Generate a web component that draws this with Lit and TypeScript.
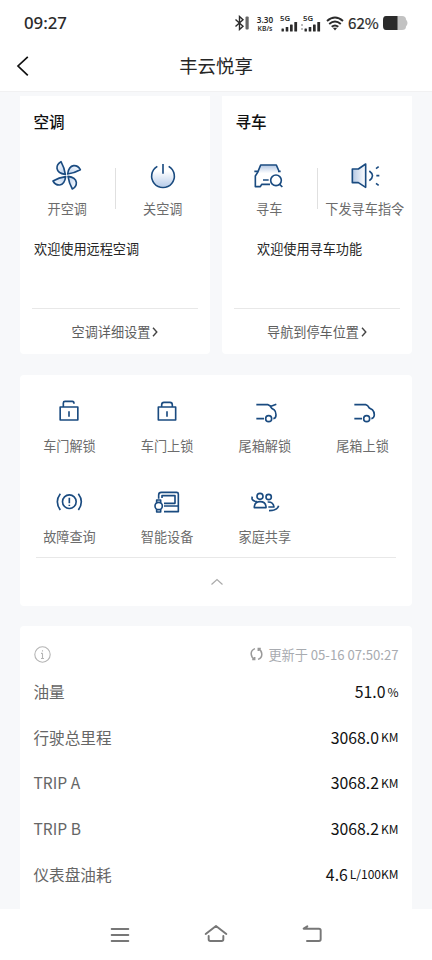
import { LitElement, html, css, svg, TemplateResult } from "lit";
import { customElement, property } from "lit/decorators.js";

type Glyph = { box: string; art: TemplateResult };

const GLYPHS: Record<string, Glyph> = {
  fan: {
    box: "125 210 96 96",
    art: svg`${[0, 90, 180, 270].map(
      (a) => svg`<path transform="rotate(${a} 172 256)" fill="url(#tint)" d="M155 215 Q142 222 143 235 Q145 250 168 253 Q165 233 155 215Z"/>`
    )}`,
  },
  power: {
    box: "411 209 96 96",
    art: svg`<circle cx="459" cy="258" r="31" fill="url(#rise)" stroke="none"/><path d="M442 228 A34 34 0 1 0 476 228 M459 221 V250"/>`,
  },
  findCar: {
    box: "112 210 96 96",
    art: svg`<path fill="url(#fall)" stroke="none" d="M135 226 H182 L191 250 H126Z"/><path d="M116 244 H126 M126 247 L135 225 H182 L191 246 M187 244 H195 M126 247 L119 258 V290 H134 L138 283 H163 M142 270 H159"/><circle cx="181" cy="271" r="16" fill="#fff"/><path d="M192 283 L200 291"/>`,
  },
  horn: {
    box: "397 209 96 96",
    art: svg`<path fill="url(#side)" d="M407 236 H425 L447 221 V291 L425 277 H407Z"/><path d="M458 242 Q477 256 458 271 M478 235 L486 229 M479 256 H488 M478 279 L486 285"/>`,
  },
  unlock: {
    box: "100 32 96 96",
    art: svg`<path d="M121.5 65 H174.5 V104 H121.5Z M131 65 V53 Q131 48 136 48 H158 Q163 48 163 55 M148 78 V94"/>`,
  },
  lock: {
    box: "393 32 96 96",
    art: svg`<path d="M415 65 H467 V104 H415Z M425 65 V59 Q425 51 432 51 H450 Q457 51 457 59 V65 M441 78 V94"/>`,
  },
  trunkOpen: {
    box: "86 32 96 96",
    art: svg`<path d="M108 58 H143 L152 63 L168 57 M149 62 Q152 69 161 73 Q167 78 167 88 Q167 99 159 100 M108 100 H131"/><circle cx="145" cy="100" r="9"/>`,
  },
  trunkShut: {
    box: "379 32 96 96",
    art: svg`<path d="M401 58 H435 Q441 59 446 68 L455 73 Q461 79 461 89 Q460 99 452 100 M401 100 H424"/><circle cx="438" cy="100" r="9"/>`,
  },
  fault: {
    box: "100 35 96 96",
    art: svg`<circle cx="149" cy="79" r="20.5"/><path d="M149 67 V84 M149 88 V92 M122 55 Q104 79 122 104 M176 55 Q194 79 176 104"/>`,
  },
  devices: {
    box: "393 35 96 96",
    art: svg`<path d="M416 70 V59 Q416 51 424 51 H470 Q475 51 475 56 V109 H432 M426 68 V61 H465 V84 H432 M432 92 H475"/><circle cx="416" cy="92" r="11"/><path d="M410 82 V74 H422 V82 M410 102 V110 H422 V102"/>`,
  },
  family: {
    box: "88 35 96 96",
    art: svg`<circle cx="121" cy="63" r="9"/><path d="M104 97 V93 Q106 79 121 79 Q137 79 139 93 V97Z"/><circle cx="147" cy="65" r="8"/><path d="M144 80 Q161 79 163 95 H146 M98 64 Q94 74 106 78 L112 79 M177 91 Q173 106 148 106"/>`,
  },
};

@customElement("line-icon")
class LineIcon extends LitElement {
  @property() name = "";
  static styles = css`
    :host { display: block; width: 32px; height: 32px; }
    svg { display: block; width: 32px; height: 32px; fill: none; stroke: #1a4b80; stroke-width: 4.9; stroke-linejoin: round; }
  `;
  render() {
    const g = GLYPHS[this.name];
    return html`<svg viewBox=${g.box}>
      <defs>
        <linearGradient id="tint" x1="0" y1="0" x2="1" y2="1"><stop offset="0" stop-color="#fff"/><stop offset="1" stop-color="#b9d0ee"/></linearGradient>
        <linearGradient id="rise" x1="0" y1="0" x2="0" y2="1"><stop offset=".25" stop-color="#fff"/><stop offset="1" stop-color="#b9cdea"/></linearGradient>
        <linearGradient id="fall" x1="0" y1="0" x2="0" y2="1"><stop offset="0" stop-color="#b4c8e4"/><stop offset="1" stop-color="#fff"/></linearGradient>
        <linearGradient id="side" x1="0" y1="0" x2="1" y2="0"><stop offset="0" stop-color="#b4c8e4"/><stop offset="1" stop-color="#fff"/></linearGradient>
      </defs>
      ${g.art}
    </svg>`;
  }
}

@customElement("status-bar")
class StatusBar extends LitElement {
  static styles = css`
    :host { display: flex; height: 46px; padding: 0 23px 0 24px; align-items: center; justify-content: space-between; color: #2b2b2b; font-family: "Noto Sans", "Noto Sans CJK SC", sans-serif; }
    .time { font-size: 16.8px; font-weight: 500; line-height: 46px; }
    .right { display: flex; align-items: center; }
    svg { display: block; }
    .speed { display: flex; flex-direction: column; align-items: center; gap: 1px; width: 20px; margin: 0 5px 0 5px; font-weight: 600; white-space: nowrap; }
    .rate { font-size: 8.2px; line-height: 9px; }
    .per { font-size: 6.8px; line-height: 7px; }
    .cell { display: flex; flex-direction: column; width: 19px; height: 17px; font-size: 7.8px; line-height: 7px; font-weight: 600; }
    .cell svg { margin-top: -2px; }
    .gap { margin-left: 2px; }
    .wifi { margin: 0 4px 0 4px; }
    .pct { width: 31px; font-size: 15.2px; line-height: 20px; font-weight: 400; margin: 0 3px 2px 0; font-family: "Noto Sans CJK SC", sans-serif; -webkit-text-stroke: .2px #2b2b2b; }
  `;
  render() {
    const cell = html`<div class="cell">5G<svg width="19" height="12" viewBox="0 0 19 12" fill="#2b2b2b">
      <rect x="1.5" y="8.5" width="2.4" height="3" rx=".5"/><rect x="5.7" y="7" width="2.6" height="4.5" rx=".5"/><rect x="10" y="4.5" width="2.7" height="7" rx=".5"/><rect x="14.3" y="2" width="2.8" height="9.5" rx=".5"/></svg></div>`;
    return html`
      <div class="time">09:27</div>
      <div class="right">
        <svg width="16" height="16" viewBox="0 0 16 16" fill="none" stroke="#2b2b2b" stroke-width="1.4"><path d="M1.5 4.5 L9 11.2 L5.5 14.5 V1.5 L9 4.8 L1.5 11.5"/><rect x="11.5" y="1.5" width="3.2" height="13" rx="1" fill="#666" stroke="none"/></svg>
        <div class="speed"><span class="rate">3.30</span><span class="per">KB/s</span></div>
        ${cell}
        <svg class="gap" width="2" height="16" viewBox="0 0 2 16" fill="#bbb"><rect y="9" width="2" height="2"/><rect y="13" width="2" height="2"/></svg>
        ${cell}
        <svg class="wifi" width="18" height="15" viewBox="0 0 18 15" fill="none" stroke="#2b2b2b" stroke-width="1.9"><path d="M1 5 Q9 -2 17 5 M3.2 8 Q9 3 14.8 8 M5.7 10.8 Q9 8 12.3 10.8"/><path d="M6.8 11.8 H11.2 L9 14.6Z" fill="#2b2b2b" stroke="none"/></svg>
        <div class="pct">62%</div>
        <svg width="27" height="16" viewBox="0 0 27 16"><path d="M15 1 H20 Q24 1 24 4.5 Q27 8 24 11.5 Q24 15 20 15 H15Z" fill="#c2c2c2"/><path d="M4 1 H15.5 V15 H4 Q1 15 1 11 V5 Q1 1 4 1Z" fill="#2b2b2b"/></svg>
      </div>`;
  }
}

@customElement("control-card")
class ControlCard extends LitElement {
  @property() heading = "";
  @property({ type: Array }) actions: [string, string][] = [];
  @property() note = "";
  @property() link = "";
  @property({ type: Boolean, reflect: true }) indent = false;
  static styles = css`
    :host { display: flex; flex-direction: column; width: 190px; height: 258px; background: #fff; border-radius: 0 0 4px 4px; }
    .heading { margin: 13px 13.5px 0; font-size: 15.6px; line-height: 24px; font-weight: 500; color: #111; }
    .actions { display: grid; grid-template-columns: 1fr 1px 1fr; margin-top: 27px; height: 58px; }
    .action { display: flex; flex-direction: column; align-items: center; font-size: 13.15px; line-height: 20px; color: #6c6c6c; white-space: nowrap; }
    .action line-icon { margin-bottom: 7px; }
    .sep { background: #e0e0e0; height: 41px; margin-top: 8px; }
    .note { margin: 21px 14px 0; font-size: 13.15px; line-height: 20px; color: #262626; }
    :host([indent]) .note { margin-left: 35px; }
    .foot { display: flex; align-items: center; justify-content: center; gap: 2px; margin: auto 12px 0; height: 45px; border-top: 1px solid #e8e8e8; font-size: 13.15px; color: #5e5e5e; }
    .foot svg { display: block; }
  `;
  render() {
    const act = ([icon, text]: [string, string]) => html`<div class="action"><line-icon name=${icon}></line-icon>${text}</div>`;
    return html`
      <div class="heading">${this.heading}</div>
      <div class="actions">${act(this.actions[0])}<div class="sep"></div>${act(this.actions[1])}</div>
      <div class="note">${this.note}</div>
      <div class="foot">${this.link}<svg width="6" height="10" viewBox="0 0 6 10" fill="none" stroke="#444" stroke-width="1.4"><path d="M1 .8 L4.8 5 L1 9.2"/></svg></div>`;
  }
}

@customElement("app-root")
class AppRoot extends LitElement {
  static styles = css`
    :host { display: flex; flex-direction: column; width: 432px; height: 960px; overflow: hidden; background: #fff; font-family: "Noto Sans CJK SC", "Noto Sans", sans-serif; }
    svg { display: block; }
    .nav { display: grid; grid-template-columns: 60px 1fr 60px; align-items: center; height: 45px; box-sizing: border-box; }
    .nav svg { margin: 0 0 5px 16px; }
    .title { text-align: center; font-size: 18.4px; line-height: 36px; margin-bottom: 7px; color: #262626; }
    .page { display: flex; flex-direction: column; height: 818px; box-sizing: border-box; padding: 4px 20px 0; background: #f7f8fa; border-top: 1px solid #f1f1f2; }
    .pair { display: flex; gap: 12px; }
    .tools { margin-top: 21px; height: 231px; background: #fff; border-radius: 4px; }
    .grid { display: grid; grid-template-columns: repeat(4, 97.7px); grid-auto-rows: 91px; padding-top: 21px; height: 161px; margin-left: .6px; }
    .tool { display: flex; flex-direction: column; align-items: center; font-size: 13.15px; line-height: 20px; color: #6c6c6c; }
    .tool line-icon { margin-bottom: 8px; }
    .more { display: flex; justify-content: center; align-items: center; height: 47px; margin: 0 16px; padding-left: 1px; border-top: 1px solid #e8e8e8; }
    .stats { margin-top: 20px; height: 283px; padding: 0 13.5px; background: #fff; border-radius: 4px 4px 0 0; }
    .meta { display: flex; justify-content: space-between; align-items: center; height: 31px; padding-top: 12.5px; color: #a8abb0; font-size: 13.15px; }
    .sync { display: flex; align-items: center; gap: 5px; }
    .row { display: flex; justify-content: space-between; align-items: center; height: 45.6px; line-height: 24px; font-size: 15.6px; color: #666; }
    .name { margin-bottom: 2px; }
    .value { display: flex; align-items: center; gap: 2px; color: #111; font-size: 15.8px; }
    .unit { font-size: 12px; margin-bottom: 1px; }
    .system { display: flex; justify-content: center; align-items: center; gap: 72px; height: 51px; }
    .system svg { fill: none; stroke: #777; stroke-width: 5.8; stroke-linecap: round; stroke-linejoin: round; }
  `;
  render() {
    const tools = [
      ["unlock", "车门解锁"], ["lock", "车门上锁"], ["trunkOpen", "尾箱解锁"], ["trunkShut", "尾箱上锁"],
      ["fault", "故障查询"], ["devices", "智能设备"], ["family", "家庭共享"],
    ];
    const rows = [
      ["油量", "51.0", "%"], ["行驶总里程", "3068.0", "KM"], ["TRIP A", "3068.2", "KM"],
      ["TRIP B", "3068.2", "KM"], ["仪表盘油耗", "4.6", "L/100KM"],
    ];
    return html`
      <status-bar></status-bar>
      <div class="nav">
        <svg width="14" height="20" viewBox="0 0 14 20" fill="none" stroke="#111" stroke-width="1.7"><path d="M11.8 .8 L2 10 L11.8 19.4"/></svg>
        <div class="title">丰云悦享</div>
      </div>
      <div class="page">
        <div class="pair">
          <control-card heading="空调" .actions=${[["fan", "开空调"], ["power", "关空调"]]} note="欢迎使用远程空调" link="空调详细设置"></control-card>
          <control-card indent heading="寻车" .actions=${[["findCar", "寻车"], ["horn", "下发寻车指令"]]} note="欢迎使用寻车功能" link="导航到停车位置"></control-card>
        </div>
        <div class="tools">
          <div class="grid">${tools.map(([i, t]) => html`<div class="tool"><line-icon name=${i}></line-icon>${t}</div>`)}</div>
          <div class="more"><svg width="14" height="8" viewBox="0 0 14 8" fill="none" stroke="#aaa" stroke-width="1.2"><path d="M1.5 6.5 L7 1.5 L12.5 6.5"/></svg></div>
        </div>
        <div class="stats">
          <div class="meta">
            <svg width="17" height="17" viewBox="0 0 17 17" fill="none" stroke="#b4b4b4" stroke-width="1.1"><circle cx="8.5" cy="8.5" r="7.7"/><path d="M8.5 7.2 V12.5 M7 7.4 H8.5 M7 12.5 H10 M8.5 4.3 V5.6"/></svg>
            <div class="sync">
              <svg width="13" height="14" viewBox="0 0 13 14" fill="none" stroke="#999" stroke-width="1.5"><path d="M5 1.6 Q1 3 1.2 7 Q1.4 10.5 4.4 12 M2.2 12.6 H4.7 V10 M8 12.4 Q12 11 11.8 7 Q11.6 3.5 8.6 2 M10.8 1.4 H8.3 V4"/></svg>
              <span>更新于 05-16 07:50:27</span>
            </div>
          </div>
          ${rows.map(([k, v, u]) => html`<div class="row"><span class="name">${k}</span><span class="value">${v}<span class="unit">${u}</span></span></div>`)}
        </div>
      </div>
      <div class="system">
        <svg width="24" height="24" viewBox="294 489 72 72"><path d="M305 507 H355 M305 525 H355 M305 543 H355"/></svg>
        <svg width="24" height="24" viewBox="582 489 72 72"><path d="M587 522 L618 498 L649 522 M596 528 V538 Q596 543 601 543 H635 Q640 543 640 538 V528"/></svg>
        <svg width="24" height="24" viewBox="870 489 72 72"><path d="M892 499 L881 506 H927 Q932 506 932 511 V538 Q932 543 927 543 H891"/></svg>
      </div>`;
  }
}
